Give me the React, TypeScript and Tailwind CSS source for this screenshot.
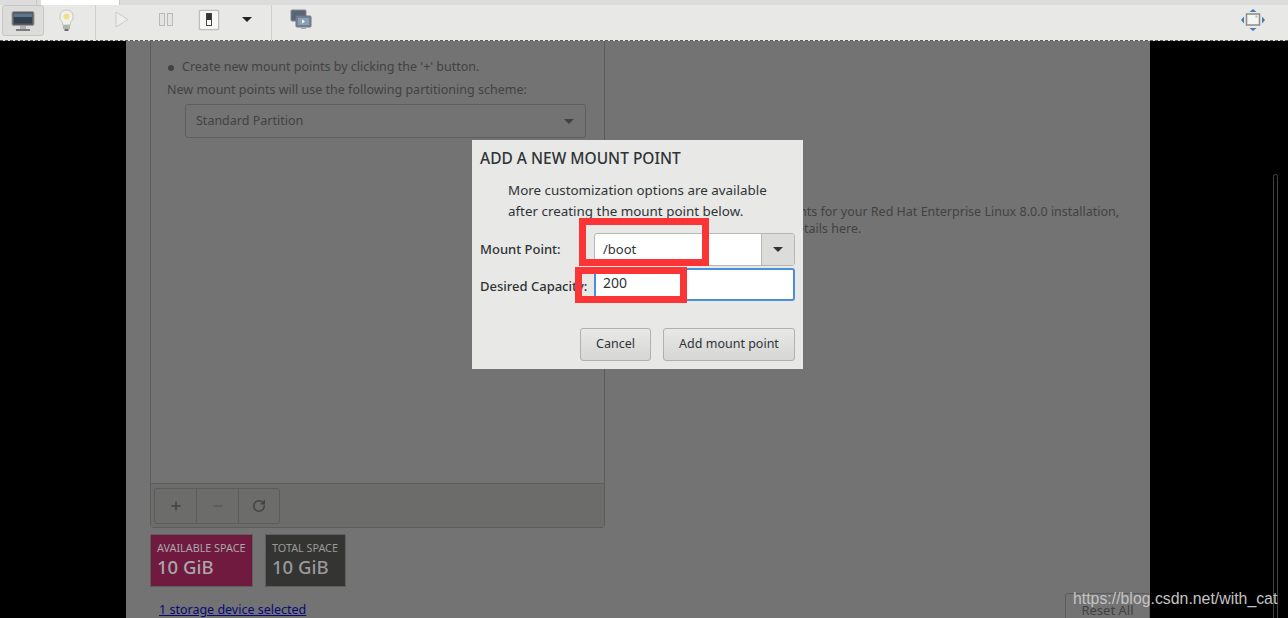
import { Plus, Minus, RotateCw } from 'lucide-react';

function Toolbar() {
  return (
    <div className="relative z-20 h-[41px] shrink-0 border-b border-dashed border-[#5a5a5a] bg-[#e8e8e6]">
      <div className="flex h-[5px] bg-[#dcdcdc]">
        <div className="ml-[36px] w-px bg-[#c8c8c8]" />
        <div className="ml-[4px] w-[78px] bg-white" />
        <div className="w-px bg-[#c8c8c8]" />
      </div>
      <div className="flex h-[29px] items-center pl-[2px]">
        <div className="flex h-[31px] w-[42px] items-center justify-center self-start rounded-[3px] border border-[#c6c6c4] bg-[#dcdcda]">
          <svg width="24" height="20" viewBox="0 0 24 20">
            <rect x="1" y="0.500" width="22" height="14" rx="1.500" fill="#5b5b5b" stroke="#9c9c9c" />
            <rect x="3" y="2.500" width="18" height="10" fill="#32404f" />
            <path d="M3 2.500h18v3.500H3z" fill="#5f7690" />
            <rect x="9" y="15" width="6" height="3" fill="#b0b0b0" />
            <rect x="5" y="18" width="14" height="2" fill="#7d7d7d" />
          </svg>
        </div>
        <div className="flex w-[44px] justify-center">
          <svg width="15" height="22" viewBox="0 0 15 22">
            <path d="M7.500 1a6.800 6.800 0 0 0-4 12.300V16h8v-2.700a6.800 6.800 0 0 0-4-12.300z" fill="#f1f1ea" stroke="#c4c4be" />
            <circle cx="7.500" cy="7.500" r="3" fill="#efe08a" />
            <rect x="4" y="16" width="7" height="4" fill="#b4b4ae" />
            <rect x="5.500" y="20" width="4" height="2" fill="#6a6a6a" />
          </svg>
        </div>
        <div className="ml-[7px] mr-[4px] h-[36px] w-px self-start bg-[#cfcfcd]" />
        <div className="flex w-[44px] justify-center">
          <svg width="14" height="17" viewBox="0 0 14 17">
            <path d="M1 1l12 7.500L1 16z" fill="#eeeeec" stroke="#c9c9c7" />
          </svg>
        </div>
        <div className="flex w-[44px] justify-center">
          <svg width="14" height="13" viewBox="0 0 14 13">
            <rect x="0.500" y="0.500" width="5" height="12" fill="#e4e4e2" stroke="#b9b9b7" />
            <rect x="8.500" y="0.500" width="5" height="12" fill="#e4e4e2" stroke="#b9b9b7" />
          </svg>
        </div>
        <div className="ml-[11px] flex h-[20px] w-[20px] items-center justify-center rounded-[2px] border border-[#bdbdbb] bg-[#f7f7f6] shadow-[0_0_1px_#888]">
          <svg width="6" height="13" viewBox="0 0 6 13">
            <rect x="0.500" y="0.500" width="5" height="12" fill="#fff" stroke="#444" />
            <rect x="1" y="1" width="4" height="6" fill="#333" />
          </svg>
        </div>
        <div className="ml-[23px] h-0 w-0 border-x-[5px] border-t-[5px] border-x-transparent border-t-[#222]" />
        <div className="ml-[19px] h-[36px] w-px self-start bg-[#cfcfcd]" />
        <div className="ml-[18px]">
          <svg width="22" height="21" viewBox="0 0 22 21">
            <rect x="1" y="1" width="15" height="11" rx="1" fill="#56657a" stroke="#8a8a8a" />
            <rect x="6" y="7" width="15" height="11" rx="1" fill="#6f8198" stroke="#777" />
            <rect x="8" y="9" width="11" height="7" fill="#8aa0b8" />
            <path d="M12 10.500l3 2-3 2z" fill="#fff" />
            <rect x="11" y="18" width="5" height="2" fill="#aaa" />
          </svg>
        </div>
        <div className="ml-auto mr-[23px]">
          <svg width="24" height="22" viewBox="0 0 24 22">
            <path d="M12 0l3.500 3h-7zM12 22l-3.500-3h7zM0 11l3-3.500v7zM24 11l-3 3.500v-7z" fill="#4a78b8" />
            <rect x="5.500" y="5" width="13" height="11" fill="#f4f4f2" stroke="#8c8c8a" strokeWidth="1.500" />
            <rect x="14.500" y="6.500" width="2" height="2" fill="#bbb" />
          </svg>
        </div>
      </div>
    </div>
  );
}

function LeftPanel() {
  return (
    <div className="flex w-[455px] shrink-0 flex-col">
      <div className="flex h-[487px] flex-col rounded-b-[4px] border border-t-0 border-[#5c5c5c] bg-[#737373]">
        <div className="flex-1 pl-[16px] pt-[17px] text-[12.500px] text-[#424242]">
          <div className="flex h-[19px] items-center">
            <span className="ml-[1px] mr-[8px] h-[6px] w-[6px] rounded-full bg-[#424242]" />
            <span>Create new mount points by clicking the '+' button.</span>
          </div>
          <div className="mt-[3px] h-[19px] leading-[19px]">New mount points will use the following partitioning scheme:</div>
          <div className="ml-[18px] mt-[5px] flex h-[34px] w-[401px] items-center justify-between rounded-[3px] border border-[#5e5e5e] pl-[10px] pr-[11px]">
            <span>Standard Partition</span>
            <span className="h-0 w-0 border-x-[5px] border-t-[5px] border-x-transparent border-t-[#424242]" />
          </div>
        </div>
        <div className="flex h-[44px] items-center border-t border-[#5c5c5c] bg-[#6c6c6b] pl-[3px]">
          <div className="flex h-[36px] rounded-[3px] border border-[#5c5c5c]">
            <div className="flex w-[42px] items-center justify-center border-r border-[#5c5c5c] text-[#424242]">
              <Plus size={14} strokeWidth={2.500} />
            </div>
            <div className="flex w-[42px] items-center justify-center border-r border-[#5c5c5c] text-[#5a5a5a]">
              <Minus size={14} strokeWidth={2.500} />
            </div>
            <div className="flex w-[40px] items-center justify-center text-[#424242]">
              <RotateCw size={14} strokeWidth={2.500} />
            </div>
          </div>
        </div>
      </div>
      <div className="mt-[6px] flex gap-[12px]">
        <div className="h-[53px] w-[103px] border border-[#5e5e5e] bg-[#701a40] pl-[6px] pt-[5px] text-[#a8a8a8]">
          <div className="text-[10.800px] leading-[15px]">AVAILABLE SPACE</div>
          <div className="text-[18.500px] font-medium leading-[23px]">10 GiB</div>
        </div>
        <div className="h-[53px] w-[81px] border border-[#5e5e5e] bg-[#343433] pl-[6px] pt-[5px] text-[#9a9a9a]">
          <div className="text-[10.800px] leading-[15px]">TOTAL SPACE</div>
          <div className="text-[18.500px] font-medium leading-[23px]">10 GiB</div>
        </div>
      </div>
      <div className="ml-[9px] mt-[14px] text-[12.500px] leading-[18px] text-[#08087a] underline">1 storage device selected</div>
    </div>
  );
}

function Dialog() {
  return (
    <div className="absolute left-[472px] top-[140px] z-10 h-[229px] w-[331px] bg-[#e8e8e7] px-[8px] pt-[9px] text-[#2e3436]">
      <div className="whitespace-nowrap text-[15.500px] font-medium leading-[18px]">ADD A NEW MOUNT POINT</div>
      <div className="ml-[28px] mt-[13px] text-[13.400px] leading-[21px]">
        More customization options are available
        <br />
        after creating the mount point below.
      </div>
      <div className="mt-[11px] flex h-[33px] items-center">
        <div className="w-[114px] text-[13px] font-medium">Mount Point:</div>
        <div className="flex h-[33px] w-[201px] overflow-hidden rounded-[3px] border border-[#b6b6b3] bg-white">
          <div className="flex flex-1 items-center pl-[8px] text-[13px]">/boot</div>
          <div className="flex w-[33px] items-center justify-center border-l border-[#b6b6b3] bg-[#dcdcda]">
            <span className="h-0 w-0 border-x-[5px] border-t-[5px] border-x-transparent border-t-[#2e3436]" />
          </div>
        </div>
      </div>
      <div className="mt-[2px] flex h-[33px] items-center">
        <div className="w-[114px] whitespace-nowrap pt-[5px] text-[13px] font-medium">Desired Capacity:</div>
        <div className="flex h-[33px] w-[201px] items-center rounded-[3px] border-2 border-[#4a90d9] bg-white pb-[4px] pl-[7px] text-[14px]">200</div>
      </div>
      <div className="mt-[27px] flex justify-end gap-[12px]">
        <div className="flex h-[33px] w-[71px] items-center justify-center rounded-[3px] border border-[#b0b0ad] bg-gradient-to-b from-[#e8e8e7] to-[#d6d6d4] text-[12.500px]">Cancel</div>
        <div className="flex h-[33px] w-[132px] items-center justify-center rounded-[3px] border border-[#b0b0ad] bg-gradient-to-b from-[#e8e8e7] to-[#d6d6d4] text-[12.500px]">Add mount point</div>
      </div>
      <div className="absolute left-[107px] top-[78px] h-[48px] w-[130px] border-[7px] border-[#fb3535]" />
      <div className="absolute left-[103px] top-[127px] h-[36px] w-[112px] border-[7px] border-[#fb3535]" />
    </div>
  );
}

export default function App() {
  return (
    <div className="relative flex h-[618px] w-[1288px] flex-col overflow-hidden bg-black font-['Noto_Sans','Open_Sans',sans-serif]">
      <Toolbar />
      <div className="flex flex-1">
        <div className="ml-[126px] flex h-full w-[1024px] bg-[#737373] pl-[24px]">
          <LeftPanel />
          <div className="relative flex-1 text-[12.500px] text-[#424242]">
            <div className="absolute left-[194px] top-[162px] whitespace-nowrap leading-[18px]">
              nts for your Red Hat Enterprise Linux 8.0.0 installation,
            </div>
            <div className="absolute left-[192px] top-[179px] whitespace-nowrap leading-[18px]">etails here.</div>
            <div className="absolute bottom-[-9px] right-0 flex h-[35px] w-[85px] items-center justify-center rounded-[3px] border border-[#5c5c5c] text-[13px]">Reset All</div>
          </div>
        </div>
        <div className="ml-auto mr-[10px] mt-[133px] h-[445px] w-[5px] rounded-t-full border border-[#3f4442]" />
      </div>
      <Dialog />
      <div className="absolute left-[1073px] top-[589px] z-30 font-['Liberation_Sans',sans-serif] text-[15.850px] leading-[20px] text-[#c4c4c4]">https://blog.csdn.net/with_cat</div>
    </div>
  );
}
